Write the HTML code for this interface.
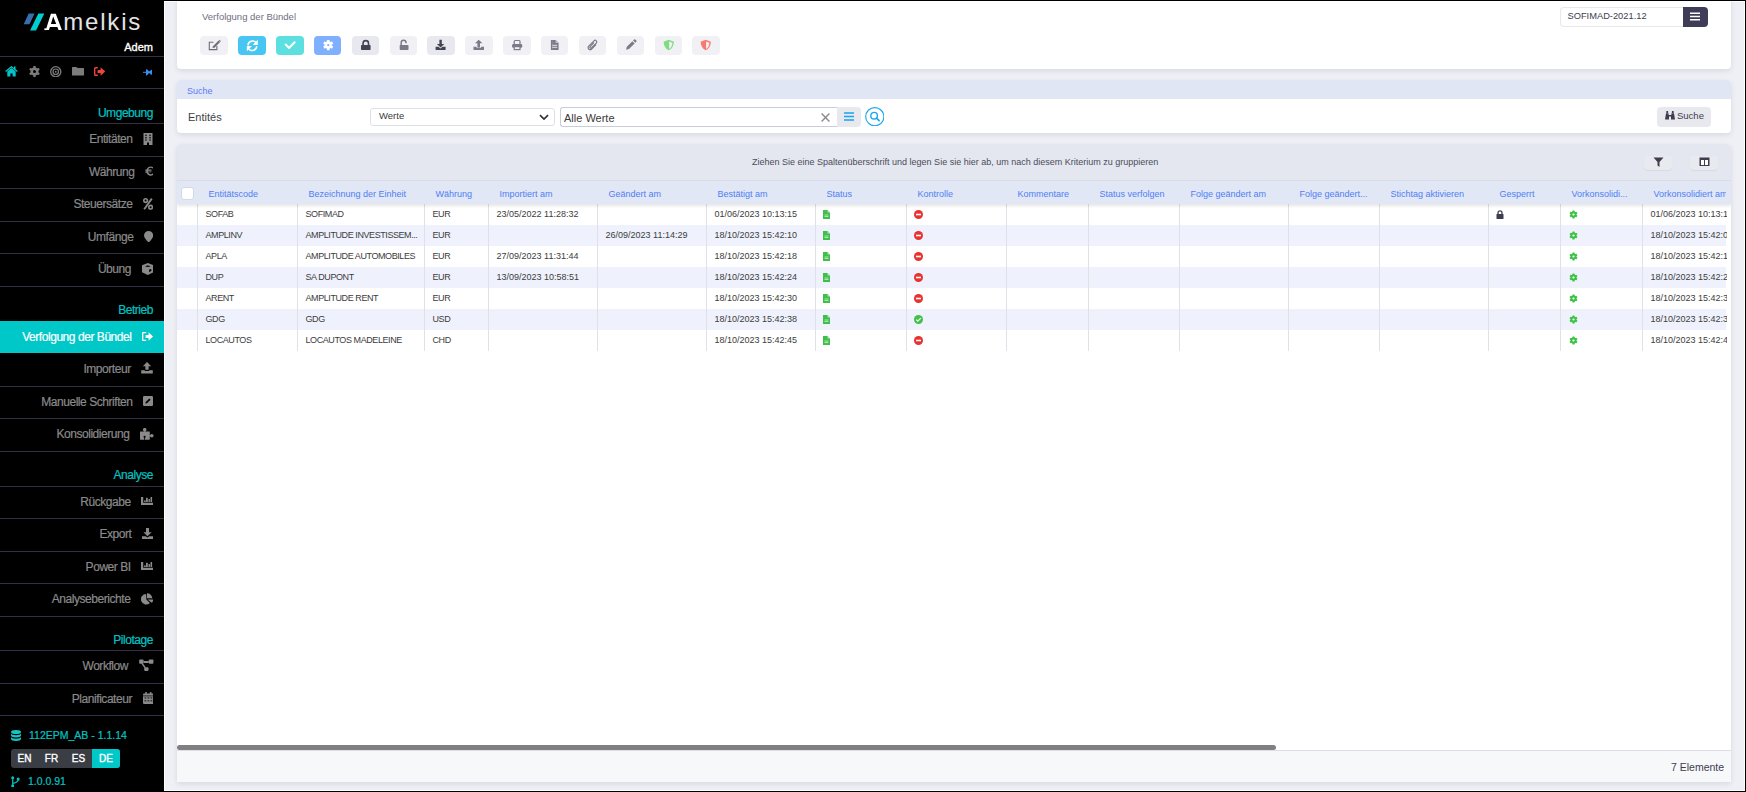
<!DOCTYPE html><html><head><meta charset="utf-8"><style>
*{box-sizing:border-box;margin:0;padding:0}
html,body{width:1746px;height:792px;overflow:hidden;background:#000;font-family:"Liberation Sans",sans-serif;position:relative}
div,span,svg{position:absolute}
.t{white-space:nowrap}
.ln{left:0;width:164px;height:1px;background:#332f47}
.it{font-size:12px;letter-spacing:-0.45px;color:#8a8a8a;line-height:12px;-webkit-text-stroke:0.2px currentColor}
.hd{font-size:12px;letter-spacing:-0.45px;color:#00c4c4;line-height:12px;-webkit-text-stroke:0.2px currentColor}
.card{background:#fff;border-radius:4px;box-shadow:0 2px 5px rgba(70,70,100,.13)}
.tb{top:36.3px;width:27.5px;height:19px;border-radius:4px;background:#f0f0f4}
.th{top:189px;font-size:9px;color:#4f7ef6;line-height:10px}
.cell{font-size:9px;color:#3c3c3c;line-height:10px}
.vl{top:204px;width:1px;height:147px;background:#dfe1e7}
</style></head><body>
<div style="left:164px;top:1px;width:1581px;height:790px;background:#fff"></div>
<div style="left:165px;top:2px;width:1580px;height:788px;background:#eef0f5"></div>
<div style="left:0;top:0;width:164px;height:792px;background:#000"></div>
<svg style="left:22px;top:12px" width="24" height="20" viewBox="22 12 24 20"><path d="M28.6 13.6h5.4q.6 0 .3.6l-4.6 9.5q-.3.6-.9.6h-4.6q-.6 0-.3-.6l4.4-9.5q.3-.6.3-.6z" fill="#3a6dab"/><path d="M38.6 13.6h5.1q.6 0 .3.6l-7.7 15.8q-.3.6-.9.6h-4.8q-.6 0-.3-.6l7.7-15.8q.3-.6.6-.6z" fill="#00cfd2"/></svg>
<svg style="left:40px;top:10px" width="26" height="24" viewBox="40 10 26 24"><path fill-rule="evenodd" d="M45.8 30.1L50.9 13.8H55.8L61.9 30.1H58.5L57.4 27H49.9L48.9 30.1Z M50.9 23.9H56.2L53.2 16.5Z" fill="#fff"/><rect x="44.4" y="28.3" width="1.9" height="1.8" fill="#fff"/></svg>
<div class="t" style="left:63.3px;top:10.1px;font-size:24px;color:#e4e4e4;line-height:24px;letter-spacing:1.8px">melkis</div>
<div class="t" style="right:1593px;top:41px;font-size:11px;color:#fff;line-height:12px;letter-spacing:0;-webkit-text-stroke:0.35px #fff">Adem</div>
<div class="ln" style="top:56px"></div>
<div class="ln" style="top:88px"></div>
<svg style="left:5px;top:66px" width="13" height="10.5" viewBox="0 0 13 10.5"><path d="M0.6 5.6L6.5 0.7l5.9 4.9" stroke="#00c4c6" stroke-width="1.3" fill="none" stroke-linejoin="round"/><rect x="9" y="0.4" width="1.5" height="3" fill="#00c4c6"/><path d="M2.3 5.4L6.5 2 10.7 5.4V10.5H7.6V7.6H5.4v2.9H2.3z" fill="#00c4c6"/></svg>
<svg style="left:28.6px;top:66px" width="11" height="11" viewBox="0 0 11 11"><g fill="#7c7c7c"><circle cx="5.5" cy="5.5" r="4"/><rect x="4.3" y="0" width="2.4" height="2.5" rx="0.6"/><rect x="4.3" y="8.5" width="2.4" height="2.5" rx="0.6"/><rect x="4.3" y="0" width="2.4" height="2.5" rx="0.6" transform="rotate(60 5.5 5.5)"/><rect x="4.3" y="0" width="2.4" height="2.5" rx="0.6" transform="rotate(120 5.5 5.5)"/><rect x="4.3" y="0" width="2.4" height="2.5" rx="0.6" transform="rotate(240 5.5 5.5)"/><rect x="4.3" y="0" width="2.4" height="2.5" rx="0.6" transform="rotate(300 5.5 5.5)"/></g><circle cx="5.5" cy="5.5" r="1.5" fill="#000"/></svg>
<svg style="left:50px;top:65.7px" width="11.5" height="11.5" viewBox="0 0 11.5 11.5"><circle cx="5.75" cy="5.75" r="5.05" fill="none" stroke="#7c7c7c" stroke-width="1.3"/><circle cx="5.75" cy="5.75" r="2.75" fill="none" stroke="#7c7c7c" stroke-width="1.2"/><circle cx="5.75" cy="5.75" r="0.9" fill="#7c7c7c"/></svg>
<svg style="left:71.8px;top:67px" width="12" height="8.5" viewBox="0 0 12 8.5"><path d="M0 0.6Q0 0 0.6 0H4.4L5.6 1.1H11.4Q12 1.1 12 1.7V7.9Q12 8.5 11.4 8.5H0.6Q0 8.5 0 7.9z" fill="#7c7c7c"/></svg>
<svg style="left:93.8px;top:66.8px" width="11.2" height="9" viewBox="0 0 11.2 9"><path d="M3.8 0.7H1.6Q0.7 0.7 0.7 1.6V7.4Q0.7 8.3 1.6 8.3H3.8" stroke="#ee4638" stroke-width="1.4" fill="none"/><path d="M3.6 3.1h3V0.2l4.6 4.3-4.6 4.3V5.9h-3z" fill="#ee4638"/></svg>
<svg style="left:143px;top:69px" width="9.2" height="6.6" viewBox="0 0 9.2 6.6"><path d="M0 3.3h3.5" stroke="#3d8bf3" stroke-width="1"/><path d="M3 0.2Q4 0 4.6 0.8L5.8 2.3H6.6L8 0.9Q9.2 0.6 9 1.8V4.8Q9.2 6 8 5.7L6.6 4.3H5.8L4.6 5.8Q4 6.6 3 6.4z" fill="#3d8bf3"/></svg>
<div class="ln" style="top:123px"></div>
<div class="ln" style="top:155.5px"></div>
<div class="ln" style="top:188px"></div>
<div class="ln" style="top:220.5px"></div>
<div class="ln" style="top:253px"></div>
<div class="ln" style="top:285.5px"></div>
<div class="ln" style="top:385.5px"></div>
<div class="ln" style="top:418px"></div>
<div class="ln" style="top:450.5px"></div>
<div class="ln" style="top:485.5px"></div>
<div class="ln" style="top:518px"></div>
<div class="ln" style="top:550.5px"></div>
<div class="ln" style="top:583px"></div>
<div class="ln" style="top:615.5px"></div>
<div class="ln" style="top:650px"></div>
<div class="ln" style="top:682.5px"></div>
<div class="ln" style="top:715px"></div>
<div class="t hd" style="right:1593px;top:106.7px">Umgebung</div>
<div class="t hd" style="right:1593px;top:304.2px">Betrieb</div>
<div class="t hd" style="right:1593px;top:469.2px">Analyse</div>
<div class="t hd" style="right:1593px;top:633.7px">Pilotage</div>
<div class="t it" style="right:1613.50px;top:133.35px;color:#8a8a8a">Entitäten</div>
<svg style="left:143px;top:132.75px" width="10" height="12.0" viewBox="0 0 10 12.0"><path d="M0.5 0h9v12H6V9.5H4V12H0.5z" fill="#8a8a8a"/><g fill="#000"><rect x="2.3" y="1.6" width="1.3" height="1.5"/><rect x="6.4" y="1.6" width="1.3" height="1.5"/><rect x="2.3" y="4" width="1.3" height="1.5"/><rect x="6.4" y="4" width="1.3" height="1.5"/><rect x="2.3" y="6.4" width="1.3" height="1.3"/><rect x="6.4" y="6.4" width="1.3" height="1.3"/></g></svg>
<div class="t it" style="right:1611.50px;top:165.85px;color:#8a8a8a">Währung</div>
<svg style="left:145px;top:165.95px" width="8.5" height="10.0" viewBox="0 0 8.5 10.0"><path d="M8 1.2A4.3 4.3 0 0 0 1.6 3.5H0.3v1.3h1.1v.7H0.3v1.3h1.3A4.3 4.3 0 0 0 8 9V7.3a2.9 2.9 0 0 1-4.9-1.1h3.4V5.5H2.9v-.7h3.6V3.5H3.1A2.9 2.9 0 0 1 8 2.7z" fill="#8a8a8a"/></svg>
<div class="t it" style="right:1613.50px;top:198.35px;color:#8a8a8a">Steuersätze</div>
<svg style="left:143px;top:197.95px" width="10" height="12.0" viewBox="0 0 10 12.0"><circle cx="2.6" cy="2.6" r="1.8" fill="none" stroke="#8a8a8a" stroke-width="1.6"/><circle cx="7.6" cy="9.2" r="1.8" fill="none" stroke="#8a8a8a" stroke-width="1.6"/><path d="M8.8 0.6L1.2 11.2" stroke="#8a8a8a" stroke-width="1.9"/></svg>
<div class="t it" style="right:1612.60px;top:230.85px;color:#8a8a8a">Umfänge</div>
<svg style="left:143.9px;top:230.95px" width="9.199999999999989" height="11.5" viewBox="0 0 9.199999999999989 11.5"><path d="M4.6 0A4.6 4.6 0 0 0 0 4.6C0 7.3 4.6 11.5 4.6 11.5S9.2 7.3 9.2 4.6A4.6 4.6 0 0 0 4.6 0z" fill="#8a8a8a"/></svg>
<div class="t it" style="right:1615.00px;top:263.35px;color:#8a8a8a">Übung</div>
<svg style="left:141.5px;top:263.05px" width="11.599999999999994" height="12.0" viewBox="0 0 11.599999999999994 12.0"><path d="M5.8 0L11.6 2.3v7L5.8 12 0 9.3v-7z" fill="#8a8a8a"/><path d="M3 3.2Q5.8 1.8 8.6 3.2Q5.8 4.6 3 3.2z" fill="#000"/><path d="M7.2 6.6Q9.2 5 9.4 7.2Q8.7 8.6 7.2 9.2z" fill="#000"/></svg>
<div style="left:0;top:320.5px;width:164px;height:32.0px;background:#00c8c8"></div>
<div class="t it" style="right:1614.50px;top:330.60px;color:#fff">Verfolgung der Bündel</div>
<svg style="left:142px;top:332.00px" width="11" height="9.0" viewBox="0 0 11 9.0"><path d="M4.2 0.6H1.6A1 1 0 0 0 0.6 1.6v5.8a1 1 0 0 0 1 1h2.6" stroke="#fff" stroke-width="1.5" fill="none"/><path d="M3.6 3h3V0.3L11 4.5 6.6 8.7V6h-3z" fill="#fff"/></svg>
<div class="t it" style="right:1615.30px;top:363.10px;color:#8a8a8a">Importeur</div>
<svg style="left:141.2px;top:362.40px" width="12.0" height="11.399999999999999" viewBox="0 0 12.0 11.399999999999999"><path d="M6 0L10.2 4.3H7.6V7.8H4.4V4.3H1.8z" fill="#8a8a8a"/><path d="M0.2 8.3h3.6v0.6h4.4v-0.6h3.6v3.1H0.2z" fill="#8a8a8a"/></svg>
<div class="t it" style="right:1613.50px;top:395.85px;color:#8a8a8a">Manuelle Schriften</div>
<svg style="left:143px;top:395.75px" width="10" height="10" viewBox="0 0 10 10"><rect x="0" y="0" width="10" height="10" rx="1.2" fill="#8a8a8a"/><path d="M2.4 7.6l.3-1.6 3.6-3.6 1.3 1.3-3.6 3.6z" fill="#000"/></svg>
<div class="t it" style="right:1616.50px;top:428.35px;color:#8a8a8a">Konsolidierung</div>
<svg style="left:140px;top:427.75px" width="14" height="12.0" viewBox="0 0 14 12.0"><rect x="0" y="3.45" width="9.8" height="8.2" rx="0.4" fill="#8a8a8a"/><circle cx="4.7" cy="1.75" r="1.8" fill="#8a8a8a"/><rect x="3.9" y="2.5" width="1.6" height="1.2" fill="#8a8a8a"/><circle cx="11.8" cy="7.75" r="1.8" fill="#8a8a8a"/><rect x="9.6" y="7.0" width="1.2" height="1.5" fill="#8a8a8a"/><circle cx="4.6" cy="8.8" r="1.1" fill="#000"/><rect x="4.2" y="8.8" width="0.8" height="3" fill="#000"/></svg>
<div class="t it" style="right:1615.30px;top:495.85px;color:#8a8a8a">Rückgabe</div>
<svg style="left:141.2px;top:496.85px" width="12.0" height="8.0" viewBox="0 0 12.0 8.0"><path d="M0 0h2.2v5.7H12V8H0z" fill="#8a8a8a"/><rect x="3.1" y="3.4" width="1.6" height="1.6" fill="#8a8a8a"/><rect x="5" y="0.8" width="1.8" height="4.2" fill="#8a8a8a"/><rect x="7.5" y="2" width="1.4" height="3" fill="#8a8a8a"/><rect x="9.5" y="0" width="1.6" height="5" fill="#8a8a8a"/></svg>
<div class="t it" style="right:1614.50px;top:528.35px;color:#8a8a8a">Export</div>
<svg style="left:142px;top:527.85px" width="11" height="11.4" viewBox="0 0 11 11.4"><path d="M4 0h3v4.2h2.6L5.5 8.3 1.4 4.2H4z" fill="#8a8a8a"/><path d="M0 8.2h3.6l1.9 1.2 1.9-1.2H11v3.2H0z" fill="#8a8a8a"/></svg>
<div class="t it" style="right:1615.30px;top:560.85px;color:#8a8a8a">Power BI</div>
<svg style="left:141.2px;top:561.85px" width="12.0" height="8.0" viewBox="0 0 12.0 8.0"><path d="M0 0h2.2v5.7H12V8H0z" fill="#8a8a8a"/><rect x="3.1" y="3.4" width="1.6" height="1.6" fill="#8a8a8a"/><rect x="5" y="0.8" width="1.8" height="4.2" fill="#8a8a8a"/><rect x="7.5" y="2" width="1.4" height="3" fill="#8a8a8a"/><rect x="9.5" y="0" width="1.6" height="5" fill="#8a8a8a"/></svg>
<div class="t it" style="right:1615.60px;top:593.35px;color:#8a8a8a">Analyseberichte</div>
<svg style="left:140.9px;top:593.00px" width="12.5" height="11.8" viewBox="0 0 12.5 11.8"><path d="M5.2 0.9A5.3 5.3 0 1 0 8.9 10L5.4 6.5z" fill="#8a8a8a"/><path d="M6 0.2V5.3H11.3A5.3 5.3 0 0 0 6 0.2z" fill="#8a8a8a"/><path d="M6.6 6.4H12.4A5.5 5.5 0 0 1 10.8 9.8z" fill="#8a8a8a"/></svg>
<div class="t it" style="right:1618.00px;top:660.35px;color:#8a8a8a">Workflow</div>
<svg style="left:138.5px;top:659.00px" width="15.0" height="12.0" viewBox="0 0 15.0 12.0"><rect x="0.2" y="0.5" width="4.3" height="4.2" rx="0.8" fill="#8a8a8a"/><rect x="9.8" y="0.5" width="4.6" height="4.2" rx="0.8" fill="#8a8a8a"/><rect x="5.2" y="8.2" width="4.3" height="3.7" rx="0.8" fill="#8a8a8a"/><path d="M4.5 3h5.3" stroke="#8a8a8a" stroke-width="2"/><path d="M3 4.3l3 4.2" stroke="#8a8a8a" stroke-width="1.4"/></svg>
<div class="t it" style="right:1614.00px;top:692.85px;color:#8a8a8a">Planificateur</div>
<svg style="left:142.5px;top:691.90px" width="10.800000000000011" height="11.899999999999999" viewBox="0 0 10.800000000000011 11.899999999999999"><rect x="0" y="1.6" width="10.8" height="10.3" rx="1" fill="#8a8a8a"/><rect x="2.3" y="0" width="1.6" height="2.8" rx="0.6" fill="#8a8a8a"/><rect x="6.9" y="0" width="1.6" height="2.8" rx="0.6" fill="#8a8a8a"/><path d="M0 3.9h10.8" stroke="#000" stroke-width="0.7"/><g fill="#000" opacity="0.6"><rect x="1.5" y="5.2" width="1.8" height="1.5"/><rect x="4.5" y="5.2" width="1.8" height="1.5"/><rect x="7.5" y="5.2" width="1.8" height="1.5"/><rect x="1.5" y="8" width="1.8" height="1.5"/><rect x="4.5" y="8" width="1.8" height="1.5"/><rect x="7.5" y="8" width="1.8" height="1.5"/></g></svg>
<svg style="left:11px;top:729.5px" width="10" height="11" viewBox="0 0 10 11"><g fill="#16c4c4"><ellipse cx="5" cy="2" rx="5" ry="2"/><path d="M0 3.2c0 1.1 2.2 2 5 2s5-.9 5-2v2.3c0 1.1-2.2 2-5 2s-5-.9-5-2z"/><path d="M0 6.7c0 1.1 2.2 2 5 2s5-.9 5-2V9c0 1.1-2.2 2-5 2S0 10.1 0 9z"/></g></svg>
<div class="t" style="left:29px;top:729px;font-size:10.5px;color:#00c4c4;line-height:12px;-webkit-text-stroke:0.2px #00c4c4">112EPM_AB - 1.1.14</div>
<div style="left:11px;top:749px;width:109px;height:19px;border-radius:3px;background:#3a3d44;overflow:hidden"><div style="left:81px;top:0;width:28px;height:19px;background:#00c8c8"></div><div class="t" style="left:0;width:27px;top:3.5px;text-align:center;font-size:10px;color:#fff;line-height:11px;-webkit-text-stroke:0.35px #fff">EN</div><div class="t" style="left:27px;width:27px;top:3.5px;text-align:center;font-size:10px;color:#fff;line-height:11px;-webkit-text-stroke:0.35px #fff">FR</div><div class="t" style="left:54px;width:27px;top:3.5px;text-align:center;font-size:10px;color:#fff;line-height:11px;-webkit-text-stroke:0.35px #fff">ES</div><div class="t" style="left:81px;width:28px;top:3.5px;text-align:center;font-size:10px;color:#fff;line-height:11px;-webkit-text-stroke:0.35px #fff">DE</div></div>
<svg style="left:10.5px;top:775.5px" width="9" height="11.5" viewBox="0 0 9 11.5"><g fill="#00c4c4"><circle cx="1.7" cy="1.7" r="1.5"/><circle cx="1.7" cy="9.8" r="1.5"/><circle cx="7.2" cy="3" r="1.5"/></g><path d="M1.7 2v7.5M7.2 3.5Q7.2 6.3 1.9 7.4" stroke="#00c4c4" stroke-width="1.2" fill="none"/></svg>
<div class="t" style="left:28px;top:775px;font-size:10.5px;color:#00c4c4;line-height:12px;-webkit-text-stroke:0.2px #00c4c4">1.0.0.91</div>
<div class="card" style="left:177px;top:-4px;width:1554px;height:73px"></div>
<div class="t" style="left:202px;top:11px;font-size:9.5px;color:#6e6e7e;line-height:11px">Verfolgung der Bündel</div>
<div class="tb" style="left:200.30px;background:#f0f0f5"><svg style="left:0;top:0" width="27.5" height="19" viewBox="0 0 27.5 19"><path d="M13.5 6.3H9.3v7.3h7.6v-3.5" stroke="#6e6e7a" stroke-width="1.1" fill="none"/><path d="M12.6 12.1l.4-1.9 5.6-5.6 1.5 1.5-5.6 5.6z" fill="#6e6e7a"/><path d="M18.9 4.3l.6-.6 1.5 1.5-.6.6z" fill="#6e6e7a"/></svg></div>
<div class="tb" style="left:238.15px;background:#48c6f3"><svg style="left:0;top:0" width="27.5" height="19" viewBox="0 0 27.5 19"><path d="M10 9.4A4.5 4.5 0 0 1 17.9 6.6" stroke="#fff" stroke-width="1.6" fill="none"/><path d="M19.8 3.8V8.9H14.7z" fill="#fff"/><path d="M18.7 10.2A4.5 4.5 0 0 1 10.8 12.9" stroke="#fff" stroke-width="1.6" fill="none"/><path d="M8.9 15.2V10.1H14z" fill="#fff"/></svg></div>
<div class="tb" style="left:276.00px;background:#5cdfe0"><svg style="left:0;top:0" width="27.5" height="19" viewBox="0 0 27.5 19"><path d="M9.7 8.6l3.3 3.3 5.6-5.6" stroke="#fff" stroke-width="2.1" fill="none" stroke-linecap="round" stroke-linejoin="round"/></svg></div>
<div class="tb" style="left:313.85px;background:#7fb0ff"><svg style="left:0;top:0" width="27.5" height="19" viewBox="0 0 27.5 19"><circle cx="14.25" cy="9.05" r="3.7" fill="#fff"/><rect x="12.95" y="3.95" width="2.6" height="2.2" rx="0.5" fill="#fff" transform="rotate(0.0 14.25 9.05)"/><rect x="12.95" y="3.95" width="2.6" height="2.2" rx="0.5" fill="#fff" transform="rotate(60.0 14.25 9.05)"/><rect x="12.95" y="3.95" width="2.6" height="2.2" rx="0.5" fill="#fff" transform="rotate(120.0 14.25 9.05)"/><rect x="12.95" y="3.95" width="2.6" height="2.2" rx="0.5" fill="#fff" transform="rotate(180.0 14.25 9.05)"/><rect x="12.95" y="3.95" width="2.6" height="2.2" rx="0.5" fill="#fff" transform="rotate(240.0 14.25 9.05)"/><rect x="12.95" y="3.95" width="2.6" height="2.2" rx="0.5" fill="#fff" transform="rotate(300.0 14.25 9.05)"/><circle cx="14.25" cy="9.05" r="1.1" fill="#7fb0ff"/></svg></div>
<div class="tb" style="left:351.70px;background:#e8e9ef"><svg style="left:0;top:0" width="27.5" height="19" viewBox="0 0 27.5 19"><path d="M11.1 9.2V7.3a2.7 2.7 0 0 1 5.4 0v1.9" stroke="#434352" stroke-width="1.6" fill="none"/><rect x="9" y="9" width="9.6" height="4.9" rx="0.7" fill="#434352"/></svg></div>
<div class="tb" style="left:389.55px;background:#f0f0f5"><svg style="left:0;top:0" width="27.5" height="19" viewBox="0 0 27.5 19"><path d="M11.2 9.2V6.6a2.4 2.4 0 0 1 4.8 0v.6" stroke="#7b7b87" stroke-width="1.5" fill="none"/><rect x="9.7" y="9" width="8.8" height="4.9" rx="0.7" fill="#7b7b87"/></svg></div>
<div class="tb" style="left:427.40px;background:#e8e9ef"><svg style="left:0;top:0" width="27.5" height="19" viewBox="0 0 27.5 19"><path d="M12.4 3.7h2.4v4.3h2.5l-3.7 3.5-3.7-3.5h2.5z" fill="#434352"/><path d="M8.6 10.8h3l1.9 1.8 1.9-1.8h3.2v3.3H8.6z" fill="#434352"/></svg></div>
<div class="tb" style="left:465.25px;background:#f0f0f5"><svg style="left:0;top:0" width="27.5" height="19" viewBox="0 0 27.5 19"><path d="M13.7 3.7l3.7 3.6h-2.4v4.2h-2.6V7.3H10z" fill="#7b7b87"/><path d="M8.5 10.8h3v0.9h4.6v-.9H19v3.3H8.5z" fill="#7b7b87"/></svg></div>
<div class="tb" style="left:503.10px;background:#f0f0f5"><svg style="left:0;top:0" width="27.5" height="19" viewBox="0 0 27.5 19"><rect x="11.2" y="4.5" width="5.8" height="4" rx="0.9" fill="none" stroke="#7b7b87" stroke-width="1.2"/><rect x="9.1" y="8" width="10.1" height="3.7" rx="1.3" fill="#7b7b87"/><rect x="11.2" y="10.6" width="5.8" height="3" fill="#f0f0f5" stroke="#7b7b87" stroke-width="1.2"/></svg></div>
<div class="tb" style="left:540.95px;background:#f0f0f5"><svg style="left:0;top:0" width="27.5" height="19" viewBox="0 0 27.5 19"><path d="M9.9 3.9h4.8l2.9 2.9v7.1H9.9z" fill="#7b7b87"/><path d="M14.5 3.9v3.1h3.1" fill="#f0f0f5" opacity="0.6"/><path d="M11.3 9.3h4.9M11.3 11.3h4.9" stroke="#f0f0f5" stroke-width="0.9"/><path d="M11.2 4.5v9" stroke="#f0f0f5" stroke-width="0.4" opacity="0.5"/></svg></div>
<div class="tb" style="left:578.80px;background:#f0f0f5"><svg style="left:0;top:0" width="27.5" height="19" viewBox="0 0 27.5 19"><path d="M17 8.6L12.6 13a2 2 0 0 1-2.9-2.9l5.3-5.3a1.6 1.6 0 0 1 2.3 2.3L12.4 11.9a0.9 0.9 0 0 1-1.3-1.3l3.9-3.9" stroke="#7b7b87" stroke-width="1.2" fill="none"/></svg></div>
<div class="tb" style="left:616.65px;background:#f0f0f5"><svg style="left:0;top:0" width="27.5" height="19" viewBox="0 0 27.5 19"><path d="M9.1 13.7l.7-2.9 5.6-5.6 2.2 2.2-5.6 5.6z" fill="#7b7b87"/><path d="M16.1 4.5l1-1q.6-.5 1.1 0l1.1 1.1q.5.5 0 1.1l-1 1z" fill="#7b7b87"/></svg></div>
<div class="tb" style="left:654.50px;background:#f0f0f5"><svg style="left:0;top:0" width="27.5" height="19" viewBox="0 0 27.5 19"><path d="M13.75 3.8l5.1 2c0 4-2 7.2-5.1 8.5-3.1-1.3-5.1-4.5-5.1-8.5z" fill="#7ddd7f"/><path d="M14.1 5.4l3.3 1.3c-.1 2.9-1.4 5.1-3.3 6.2z" fill="#f2f2f5"/></svg></div>
<div class="tb" style="left:692.35px;background:#f0f0f5"><svg style="left:0;top:0" width="27.5" height="19" viewBox="0 0 27.5 19"><path d="M13.75 3.8l5.1 2c0 4-2 7.2-5.1 8.5-3.1-1.3-5.1-4.5-5.1-8.5z" fill="#f87a6e"/><path d="M14.1 5.4l3.3 1.3c-.1 2.9-1.4 5.1-3.3 6.2z" fill="#f2f2f5"/></svg></div>
<div style="left:1560px;top:7px;width:124px;height:19.5px;border:1px solid #e6e8f0;border-right:none;border-radius:4px 0 0 4px;background:#fff"></div>
<div class="t" style="left:1567.5px;top:11px;font-size:9.3px;color:#3d3d4f;line-height:11px">SOFIMAD-2021.12</div>
<div style="left:1683px;top:7px;width:25px;height:19.5px;border-radius:0 4px 4px 0;background:#3e3c56"><svg style="left:7px;top:5px" width="10" height="9" viewBox="0 0 10 9"><path d="M0 1.2h10M0 4.5h10M0 7.8h10" stroke="#fff" stroke-width="1.5"/></svg></div>
<div class="card" style="left:177px;top:80px;width:1554px;height:53px;overflow:hidden"><div style="left:0;top:0;width:1554px;height:18.5px;background:#e1e6f4"></div></div>
<div class="t" style="left:187px;top:86px;font-size:9px;color:#5a7bf9;line-height:10px">Suche</div>
<div class="t" style="left:188px;top:111px;font-size:11px;color:#3f3f3f;line-height:12px">Entités</div>
<div style="left:370px;top:108px;width:185px;height:18px;border:1px solid #dde0e6;border-radius:3px;background:#fff"></div>
<div class="t" style="left:379px;top:110px;font-size:9.5px;color:#3a3a3a;line-height:11px">Werte</div>
<svg style="left:538.8px;top:114px" width="10" height="7" viewBox="0 0 10 7"><path d="M1 1.2l4 3.8 4-3.8" stroke="#333" stroke-width="1.7" fill="none"/></svg>
<div style="left:560px;top:107px;width:277px;height:20px;border:1px solid #c9ced6;border-right:none;border-radius:3px 0 0 3px;background:#fff"></div>
<div class="t" style="left:564px;top:111.5px;font-size:11px;color:#3a3a3a;line-height:12px">Alle Werte</div>
<svg style="left:820.5px;top:112.5px" width="9" height="9" viewBox="0 0 9 9"><path d="M0.6 0.6l7.8 7.8M8.4 0.6l-7.8 7.8" stroke="#8c8c8c" stroke-width="1.45"/></svg>
<div style="left:837px;top:107px;width:24px;height:20px;border-radius:0 4px 4px 0;background:#e8e9ef"><svg style="left:7px;top:5px" width="10" height="9" viewBox="0 0 10 9"><path d="M0 1h10M0 4.5h10M0 8h10" stroke="#1aa3ef" stroke-width="1.3"/></svg></div>
<svg style="left:864.8px;top:106.9px" width="19.6" height="19.4" viewBox="0 0 19.6 19.4"><circle cx="9.8" cy="9.7" r="9.1" fill="none" stroke="#1aa7f0" stroke-width="1.15"/><circle cx="9.1" cy="8.7" r="3.3" fill="none" stroke="#1aa7f0" stroke-width="1.4"/><path d="M11.5 11.1l2.6 2.5" stroke="#1aa7f0" stroke-width="1.7" stroke-linecap="round"/></svg>
<div style="left:1657px;top:107px;width:54px;height:19.5px;border-radius:4px;background:#e8e9ee"></div>
<svg style="left:1665px;top:111.3px" width="10" height="9" viewBox="0 0 10 9"><g fill="#3d3d4f"><rect x="1.3" y="0" width="1.8" height="2" rx="0.3"/><rect x="6.9" y="0" width="1.8" height="2" rx="0.3"/><path d="M1 2.2H3.6V4H6.4V2.2H9L10 8.6H6V5.6H4V8.6H0z"/></g></svg>
<div class="t" style="left:1677px;top:110.2px;font-size:9.5px;color:#3d3d4f;line-height:11px">Suche</div>
<div class="card" style="left:177px;top:144px;width:1554px;height:638px;overflow:hidden;border-radius:4px 4px 1px 1px"><div style="left:0;top:0;width:1554px;height:36px;background:#e4e7f0"></div><div style="left:0;top:36px;width:1554px;height:24px;background:#e1e7f4;box-shadow:0 2px 3px rgba(0,0,0,.10);z-index:2;border-top:1px solid #d9dde7"></div><div style="left:0;top:606px;width:1554px;height:32px;background:#f7f8fa;border-top:1px solid #dcdfe6"></div></div>
<div class="t" style="left:752px;top:157px;font-size:9px;color:#4b4b58;line-height:10px">Ziehen Sie eine Spaltenüberschrift und legen Sie sie hier ab, um nach diesem Kriterium zu gruppieren</div>
<div style="left:1644px;top:156.3px;width:28px;height:13.7px;border-radius:4px;background:#e9eaf0;box-shadow:0 1px 1px rgba(0,0,0,.06)"><svg style="left:9px;top:0.8px" width="11" height="10" viewBox="0 0 11 10"><path d="M0.5 0.5h10L6.5 5v5l-2-1.5V5z" fill="#3d3d4f"/></svg></div>
<div style="left:1690px;top:156.3px;width:28px;height:13.7px;border-radius:4px;background:#e9eaf0;box-shadow:0 1px 1px rgba(0,0,0,.06)"><svg style="left:9px;top:0.8px" width="11" height="10" viewBox="0 0 11 10"><rect x="0.5" y="0.5" width="10" height="8.5" fill="#3d3d4f"/><rect x="2" y="3" width="3" height="5" fill="#fff"/><rect x="6" y="3" width="3" height="5" fill="#fff"/></svg></div>
<div style="left:180.7px;top:186.5px;width:13.5px;height:13.5px;border-radius:3px;background:#fff;border:1px solid #d5d9e2;z-index:4"></div>
<div style="left:177px;top:0;width:1549px;height:210px;overflow:hidden;z-index:3">
<div class="t th" style="left:31.5px">Entitätscode</div>
<div class="t th" style="left:131.5px">Bezeichnung der Einheit</div>
<div class="t th" style="left:258.5px">Währung</div>
<div class="t th" style="left:322.5px">Importiert am</div>
<div class="t th" style="left:431.5px">Geändert am</div>
<div class="t th" style="left:540.5px">Bestätigt am</div>
<div class="t th" style="left:649.5px">Status</div>
<div class="t th" style="left:740.5px">Kontrolle</div>
<div class="t th" style="left:840.5px">Kommentare</div>
<div class="t th" style="left:922.5px">Status verfolgen</div>
<div class="t th" style="left:1013.5px">Folge geändert am</div>
<div class="t th" style="left:1122.5px">Folge geändert...</div>
<div class="t th" style="left:1213.5px">Stichtag aktivieren</div>
<div class="t th" style="left:1322.5px">Gesperrt</div>
<div class="t th" style="left:1394.5px">Vorkonsolidi...</div>
<div class="t th" style="left:1476.5px">Vorkonsolidiert am</div>
</div>
<div style="left:177px;top:204px;width:1550px;height:147px;overflow:hidden">
<div style="left:0;top:0px;width:1549px;height:21px;background:#fff"></div>
<div class="t cell" style="left:28.5px;top:4.9px;font-size:9px;letter-spacing:-0.42px">SOFAB</div>
<div class="t cell" style="left:128.5px;top:4.9px;font-size:9px;letter-spacing:-0.42px">SOFIMAD</div>
<div class="t cell" style="left:255.5px;top:4.9px;font-size:9px;letter-spacing:-0.42px">EUR</div>
<div class="t cell" style="left:319.5px;top:5.3px;font-size:9px">23/05/2022 11:28:32</div>
<div class="t cell" style="left:537.5px;top:5.3px;font-size:9px">01/06/2023 10:13:15</div>
<svg style="left:646px;top:5.9px" width="7" height="9" viewBox="0 0 7 9"><path d="M0 0h4.5L7 2.5V9H0z" fill="#3fbf4a"/><path d="M1.5 5h4M1.5 6.5h4" stroke="#d9f3db" stroke-width="0.7"/><path d="M4.5 0v2.5H7" fill="#b5e6b9"/></svg>
<svg style="left:737.2px;top:6.2px" width="9" height="9" viewBox="0 0 9 9"><circle cx="4.5" cy="4.5" r="4.5" fill="#e8322f"/><rect x="2" y="3.7" width="5" height="1.6" fill="#fff"/></svg>
<svg style="left:1319px;top:5.9px" width="8" height="9" viewBox="0 0 8 9"><path d="M2 4V2.8a2 2 0 0 1 4 0V4" stroke="#3d3d4f" stroke-width="1.3" fill="none"/><rect x="0.5" y="4" width="7" height="5" rx="0.6" fill="#3d3d4f"/></svg>
<svg style="left:1391.7px;top:6.2px" width="9" height="9" viewBox="0 0 9 9"><circle cx="4.5" cy="4.5" r="2.9" fill="#3cc245"/><rect x="3.35" y="0.5000000000000002" width="2.3" height="1.9" rx="0.5" fill="#3cc245" transform="rotate(0.0 4.5 4.5)"/><rect x="3.35" y="0.5000000000000002" width="2.3" height="1.9" rx="0.5" fill="#3cc245" transform="rotate(60.0 4.5 4.5)"/><rect x="3.35" y="0.5000000000000002" width="2.3" height="1.9" rx="0.5" fill="#3cc245" transform="rotate(120.0 4.5 4.5)"/><rect x="3.35" y="0.5000000000000002" width="2.3" height="1.9" rx="0.5" fill="#3cc245" transform="rotate(180.0 4.5 4.5)"/><rect x="3.35" y="0.5000000000000002" width="2.3" height="1.9" rx="0.5" fill="#3cc245" transform="rotate(240.0 4.5 4.5)"/><rect x="3.35" y="0.5000000000000002" width="2.3" height="1.9" rx="0.5" fill="#3cc245" transform="rotate(300.0 4.5 4.5)"/><circle cx="4.5" cy="4.5" r="1.1" fill="#fff"/></svg>
<div class="t cell" style="left:1473.5px;top:5.3px;font-size:9px">01/06/2023 10:13:15</div>
<div style="left:0;top:21px;width:1549px;height:21px;background:#eff2fc"></div>
<div class="t cell" style="left:28.5px;top:25.9px;font-size:9px;letter-spacing:-0.42px">AMPLINV</div>
<div class="t cell" style="left:128.5px;top:25.9px;font-size:9px;letter-spacing:-0.42px">AMPLITUDE INVESTISSEM...</div>
<div class="t cell" style="left:255.5px;top:25.9px;font-size:9px;letter-spacing:-0.42px">EUR</div>
<div class="t cell" style="left:428.5px;top:26.3px;font-size:9px">26/09/2023 11:14:29</div>
<div class="t cell" style="left:537.5px;top:26.3px;font-size:9px">18/10/2023 15:42:10</div>
<svg style="left:646px;top:26.9px" width="7" height="9" viewBox="0 0 7 9"><path d="M0 0h4.5L7 2.5V9H0z" fill="#3fbf4a"/><path d="M1.5 5h4M1.5 6.5h4" stroke="#d9f3db" stroke-width="0.7"/><path d="M4.5 0v2.5H7" fill="#b5e6b9"/></svg>
<svg style="left:737.2px;top:27.2px" width="9" height="9" viewBox="0 0 9 9"><circle cx="4.5" cy="4.5" r="4.5" fill="#e8322f"/><rect x="2" y="3.7" width="5" height="1.6" fill="#fff"/></svg>
<svg style="left:1391.7px;top:27.2px" width="9" height="9" viewBox="0 0 9 9"><circle cx="4.5" cy="4.5" r="2.9" fill="#3cc245"/><rect x="3.35" y="0.5000000000000002" width="2.3" height="1.9" rx="0.5" fill="#3cc245" transform="rotate(0.0 4.5 4.5)"/><rect x="3.35" y="0.5000000000000002" width="2.3" height="1.9" rx="0.5" fill="#3cc245" transform="rotate(60.0 4.5 4.5)"/><rect x="3.35" y="0.5000000000000002" width="2.3" height="1.9" rx="0.5" fill="#3cc245" transform="rotate(120.0 4.5 4.5)"/><rect x="3.35" y="0.5000000000000002" width="2.3" height="1.9" rx="0.5" fill="#3cc245" transform="rotate(180.0 4.5 4.5)"/><rect x="3.35" y="0.5000000000000002" width="2.3" height="1.9" rx="0.5" fill="#3cc245" transform="rotate(240.0 4.5 4.5)"/><rect x="3.35" y="0.5000000000000002" width="2.3" height="1.9" rx="0.5" fill="#3cc245" transform="rotate(300.0 4.5 4.5)"/><circle cx="4.5" cy="4.5" r="1.1" fill="#fff"/></svg>
<div class="t cell" style="left:1473.5px;top:26.3px;font-size:9px">18/10/2023 15:42:05</div>
<div style="left:0;top:42px;width:1549px;height:21px;background:#fff"></div>
<div class="t cell" style="left:28.5px;top:46.9px;font-size:9px;letter-spacing:-0.42px">APLA</div>
<div class="t cell" style="left:128.5px;top:46.9px;font-size:9px;letter-spacing:-0.42px">AMPLITUDE AUTOMOBILES</div>
<div class="t cell" style="left:255.5px;top:46.9px;font-size:9px;letter-spacing:-0.42px">EUR</div>
<div class="t cell" style="left:319.5px;top:47.3px;font-size:9px">27/09/2023 11:31:44</div>
<div class="t cell" style="left:537.5px;top:47.3px;font-size:9px">18/10/2023 15:42:18</div>
<svg style="left:646px;top:47.9px" width="7" height="9" viewBox="0 0 7 9"><path d="M0 0h4.5L7 2.5V9H0z" fill="#3fbf4a"/><path d="M1.5 5h4M1.5 6.5h4" stroke="#d9f3db" stroke-width="0.7"/><path d="M4.5 0v2.5H7" fill="#b5e6b9"/></svg>
<svg style="left:737.2px;top:48.2px" width="9" height="9" viewBox="0 0 9 9"><circle cx="4.5" cy="4.5" r="4.5" fill="#e8322f"/><rect x="2" y="3.7" width="5" height="1.6" fill="#fff"/></svg>
<svg style="left:1391.7px;top:48.2px" width="9" height="9" viewBox="0 0 9 9"><circle cx="4.5" cy="4.5" r="2.9" fill="#3cc245"/><rect x="3.35" y="0.5000000000000002" width="2.3" height="1.9" rx="0.5" fill="#3cc245" transform="rotate(0.0 4.5 4.5)"/><rect x="3.35" y="0.5000000000000002" width="2.3" height="1.9" rx="0.5" fill="#3cc245" transform="rotate(60.0 4.5 4.5)"/><rect x="3.35" y="0.5000000000000002" width="2.3" height="1.9" rx="0.5" fill="#3cc245" transform="rotate(120.0 4.5 4.5)"/><rect x="3.35" y="0.5000000000000002" width="2.3" height="1.9" rx="0.5" fill="#3cc245" transform="rotate(180.0 4.5 4.5)"/><rect x="3.35" y="0.5000000000000002" width="2.3" height="1.9" rx="0.5" fill="#3cc245" transform="rotate(240.0 4.5 4.5)"/><rect x="3.35" y="0.5000000000000002" width="2.3" height="1.9" rx="0.5" fill="#3cc245" transform="rotate(300.0 4.5 4.5)"/><circle cx="4.5" cy="4.5" r="1.1" fill="#fff"/></svg>
<div class="t cell" style="left:1473.5px;top:47.3px;font-size:9px">18/10/2023 15:42:15</div>
<div style="left:0;top:63px;width:1549px;height:21px;background:#eff2fc"></div>
<div class="t cell" style="left:28.5px;top:67.9px;font-size:9px;letter-spacing:-0.42px">DUP</div>
<div class="t cell" style="left:128.5px;top:67.9px;font-size:9px;letter-spacing:-0.42px">SA DUPONT</div>
<div class="t cell" style="left:255.5px;top:67.9px;font-size:9px;letter-spacing:-0.42px">EUR</div>
<div class="t cell" style="left:319.5px;top:68.3px;font-size:9px">13/09/2023 10:58:51</div>
<div class="t cell" style="left:537.5px;top:68.3px;font-size:9px">18/10/2023 15:42:24</div>
<svg style="left:646px;top:68.9px" width="7" height="9" viewBox="0 0 7 9"><path d="M0 0h4.5L7 2.5V9H0z" fill="#3fbf4a"/><path d="M1.5 5h4M1.5 6.5h4" stroke="#d9f3db" stroke-width="0.7"/><path d="M4.5 0v2.5H7" fill="#b5e6b9"/></svg>
<svg style="left:737.2px;top:69.2px" width="9" height="9" viewBox="0 0 9 9"><circle cx="4.5" cy="4.5" r="4.5" fill="#e8322f"/><rect x="2" y="3.7" width="5" height="1.6" fill="#fff"/></svg>
<svg style="left:1391.7px;top:69.2px" width="9" height="9" viewBox="0 0 9 9"><circle cx="4.5" cy="4.5" r="2.9" fill="#3cc245"/><rect x="3.35" y="0.5000000000000002" width="2.3" height="1.9" rx="0.5" fill="#3cc245" transform="rotate(0.0 4.5 4.5)"/><rect x="3.35" y="0.5000000000000002" width="2.3" height="1.9" rx="0.5" fill="#3cc245" transform="rotate(60.0 4.5 4.5)"/><rect x="3.35" y="0.5000000000000002" width="2.3" height="1.9" rx="0.5" fill="#3cc245" transform="rotate(120.0 4.5 4.5)"/><rect x="3.35" y="0.5000000000000002" width="2.3" height="1.9" rx="0.5" fill="#3cc245" transform="rotate(180.0 4.5 4.5)"/><rect x="3.35" y="0.5000000000000002" width="2.3" height="1.9" rx="0.5" fill="#3cc245" transform="rotate(240.0 4.5 4.5)"/><rect x="3.35" y="0.5000000000000002" width="2.3" height="1.9" rx="0.5" fill="#3cc245" transform="rotate(300.0 4.5 4.5)"/><circle cx="4.5" cy="4.5" r="1.1" fill="#fff"/></svg>
<div class="t cell" style="left:1473.5px;top:68.3px;font-size:9px">18/10/2023 15:42:22</div>
<div style="left:0;top:84px;width:1549px;height:21px;background:#fff"></div>
<div class="t cell" style="left:28.5px;top:88.9px;font-size:9px;letter-spacing:-0.42px">ARENT</div>
<div class="t cell" style="left:128.5px;top:88.9px;font-size:9px;letter-spacing:-0.42px">AMPLITUDE RENT</div>
<div class="t cell" style="left:255.5px;top:88.9px;font-size:9px;letter-spacing:-0.42px">EUR</div>
<div class="t cell" style="left:537.5px;top:89.3px;font-size:9px">18/10/2023 15:42:30</div>
<svg style="left:646px;top:89.9px" width="7" height="9" viewBox="0 0 7 9"><path d="M0 0h4.5L7 2.5V9H0z" fill="#3fbf4a"/><path d="M1.5 5h4M1.5 6.5h4" stroke="#d9f3db" stroke-width="0.7"/><path d="M4.5 0v2.5H7" fill="#b5e6b9"/></svg>
<svg style="left:737.2px;top:90.2px" width="9" height="9" viewBox="0 0 9 9"><circle cx="4.5" cy="4.5" r="4.5" fill="#e8322f"/><rect x="2" y="3.7" width="5" height="1.6" fill="#fff"/></svg>
<svg style="left:1391.7px;top:90.2px" width="9" height="9" viewBox="0 0 9 9"><circle cx="4.5" cy="4.5" r="2.9" fill="#3cc245"/><rect x="3.35" y="0.5000000000000002" width="2.3" height="1.9" rx="0.5" fill="#3cc245" transform="rotate(0.0 4.5 4.5)"/><rect x="3.35" y="0.5000000000000002" width="2.3" height="1.9" rx="0.5" fill="#3cc245" transform="rotate(60.0 4.5 4.5)"/><rect x="3.35" y="0.5000000000000002" width="2.3" height="1.9" rx="0.5" fill="#3cc245" transform="rotate(120.0 4.5 4.5)"/><rect x="3.35" y="0.5000000000000002" width="2.3" height="1.9" rx="0.5" fill="#3cc245" transform="rotate(180.0 4.5 4.5)"/><rect x="3.35" y="0.5000000000000002" width="2.3" height="1.9" rx="0.5" fill="#3cc245" transform="rotate(240.0 4.5 4.5)"/><rect x="3.35" y="0.5000000000000002" width="2.3" height="1.9" rx="0.5" fill="#3cc245" transform="rotate(300.0 4.5 4.5)"/><circle cx="4.5" cy="4.5" r="1.1" fill="#fff"/></svg>
<div class="t cell" style="left:1473.5px;top:89.3px;font-size:9px">18/10/2023 15:42:33</div>
<div style="left:0;top:105px;width:1549px;height:21px;background:#eff2fc"></div>
<div class="t cell" style="left:28.5px;top:109.9px;font-size:9px;letter-spacing:-0.42px">GDG</div>
<div class="t cell" style="left:128.5px;top:109.9px;font-size:9px;letter-spacing:-0.42px">GDG</div>
<div class="t cell" style="left:255.5px;top:109.9px;font-size:9px;letter-spacing:-0.42px">USD</div>
<div class="t cell" style="left:537.5px;top:110.3px;font-size:9px">18/10/2023 15:42:38</div>
<svg style="left:646px;top:110.9px" width="7" height="9" viewBox="0 0 7 9"><path d="M0 0h4.5L7 2.5V9H0z" fill="#3fbf4a"/><path d="M1.5 5h4M1.5 6.5h4" stroke="#d9f3db" stroke-width="0.7"/><path d="M4.5 0v2.5H7" fill="#b5e6b9"/></svg>
<svg style="left:737.2px;top:111.2px" width="9" height="9" viewBox="0 0 9 9"><circle cx="4.5" cy="4.5" r="4.5" fill="#3ec24a"/><path d="M2.3 4.6l1.5 1.5 3-3" stroke="#fff" stroke-width="1.3" fill="none"/></svg>
<svg style="left:1391.7px;top:111.2px" width="9" height="9" viewBox="0 0 9 9"><circle cx="4.5" cy="4.5" r="2.9" fill="#3cc245"/><rect x="3.35" y="0.5000000000000002" width="2.3" height="1.9" rx="0.5" fill="#3cc245" transform="rotate(0.0 4.5 4.5)"/><rect x="3.35" y="0.5000000000000002" width="2.3" height="1.9" rx="0.5" fill="#3cc245" transform="rotate(60.0 4.5 4.5)"/><rect x="3.35" y="0.5000000000000002" width="2.3" height="1.9" rx="0.5" fill="#3cc245" transform="rotate(120.0 4.5 4.5)"/><rect x="3.35" y="0.5000000000000002" width="2.3" height="1.9" rx="0.5" fill="#3cc245" transform="rotate(180.0 4.5 4.5)"/><rect x="3.35" y="0.5000000000000002" width="2.3" height="1.9" rx="0.5" fill="#3cc245" transform="rotate(240.0 4.5 4.5)"/><rect x="3.35" y="0.5000000000000002" width="2.3" height="1.9" rx="0.5" fill="#3cc245" transform="rotate(300.0 4.5 4.5)"/><circle cx="4.5" cy="4.5" r="1.1" fill="#fff"/></svg>
<div class="t cell" style="left:1473.5px;top:110.3px;font-size:9px">18/10/2023 15:42:35</div>
<div style="left:0;top:126px;width:1549px;height:21px;background:#fff"></div>
<div class="t cell" style="left:28.5px;top:130.9px;font-size:9px;letter-spacing:-0.42px">LOCAUTOS</div>
<div class="t cell" style="left:128.5px;top:130.9px;font-size:9px;letter-spacing:-0.42px">LOCAUTOS MADELEINE</div>
<div class="t cell" style="left:255.5px;top:130.9px;font-size:9px;letter-spacing:-0.42px">CHD</div>
<div class="t cell" style="left:537.5px;top:131.3px;font-size:9px">18/10/2023 15:42:45</div>
<svg style="left:646px;top:131.9px" width="7" height="9" viewBox="0 0 7 9"><path d="M0 0h4.5L7 2.5V9H0z" fill="#3fbf4a"/><path d="M1.5 5h4M1.5 6.5h4" stroke="#d9f3db" stroke-width="0.7"/><path d="M4.5 0v2.5H7" fill="#b5e6b9"/></svg>
<svg style="left:737.2px;top:132.2px" width="9" height="9" viewBox="0 0 9 9"><circle cx="4.5" cy="4.5" r="4.5" fill="#e8322f"/><rect x="2" y="3.7" width="5" height="1.6" fill="#fff"/></svg>
<svg style="left:1391.7px;top:132.2px" width="9" height="9" viewBox="0 0 9 9"><circle cx="4.5" cy="4.5" r="2.9" fill="#3cc245"/><rect x="3.35" y="0.5000000000000002" width="2.3" height="1.9" rx="0.5" fill="#3cc245" transform="rotate(0.0 4.5 4.5)"/><rect x="3.35" y="0.5000000000000002" width="2.3" height="1.9" rx="0.5" fill="#3cc245" transform="rotate(60.0 4.5 4.5)"/><rect x="3.35" y="0.5000000000000002" width="2.3" height="1.9" rx="0.5" fill="#3cc245" transform="rotate(120.0 4.5 4.5)"/><rect x="3.35" y="0.5000000000000002" width="2.3" height="1.9" rx="0.5" fill="#3cc245" transform="rotate(180.0 4.5 4.5)"/><rect x="3.35" y="0.5000000000000002" width="2.3" height="1.9" rx="0.5" fill="#3cc245" transform="rotate(240.0 4.5 4.5)"/><rect x="3.35" y="0.5000000000000002" width="2.3" height="1.9" rx="0.5" fill="#3cc245" transform="rotate(300.0 4.5 4.5)"/><circle cx="4.5" cy="4.5" r="1.1" fill="#fff"/></svg>
<div class="t cell" style="left:1473.5px;top:131.3px;font-size:9px">18/10/2023 15:42:44</div>
<div style="left:20px;top:0;width:1px;height:147px;background:#dfe1e7"></div>
<div style="left:120px;top:0;width:1px;height:147px;background:#dfe1e7"></div>
<div style="left:247px;top:0;width:1px;height:147px;background:#dfe1e7"></div>
<div style="left:311px;top:0;width:1px;height:147px;background:#dfe1e7"></div>
<div style="left:420px;top:0;width:1px;height:147px;background:#dfe1e7"></div>
<div style="left:529px;top:0;width:1px;height:147px;background:#dfe1e7"></div>
<div style="left:638px;top:0;width:1px;height:147px;background:#dfe1e7"></div>
<div style="left:729px;top:0;width:1px;height:147px;background:#dfe1e7"></div>
<div style="left:829px;top:0;width:1px;height:147px;background:#dfe1e7"></div>
<div style="left:911px;top:0;width:1px;height:147px;background:#dfe1e7"></div>
<div style="left:1002px;top:0;width:1px;height:147px;background:#dfe1e7"></div>
<div style="left:1111px;top:0;width:1px;height:147px;background:#dfe1e7"></div>
<div style="left:1202px;top:0;width:1px;height:147px;background:#dfe1e7"></div>
<div style="left:1311px;top:0;width:1px;height:147px;background:#dfe1e7"></div>
<div style="left:1383px;top:0;width:1px;height:147px;background:#dfe1e7"></div>
<div style="left:1465px;top:0;width:1px;height:147px;background:#dfe1e7"></div>
</div>
<div style="left:177px;top:745px;width:1099px;height:5px;border-radius:3px;background:#808080"></div>
<div class="t" style="left:1671px;top:762px;font-size:10.5px;color:#3d3d4f;line-height:11px">7 Elemente</div>
<div style="left:0;top:0;width:1746px;height:1px;background:#000"></div>
<div style="left:1744px;top:1px;width:1px;height:790px;background:#fff"></div>
<div style="left:1745px;top:0;width:1px;height:792px;background:#000"></div>
<div style="left:0;top:791px;width:1746px;height:1px;background:#000"></div>
</body></html>
